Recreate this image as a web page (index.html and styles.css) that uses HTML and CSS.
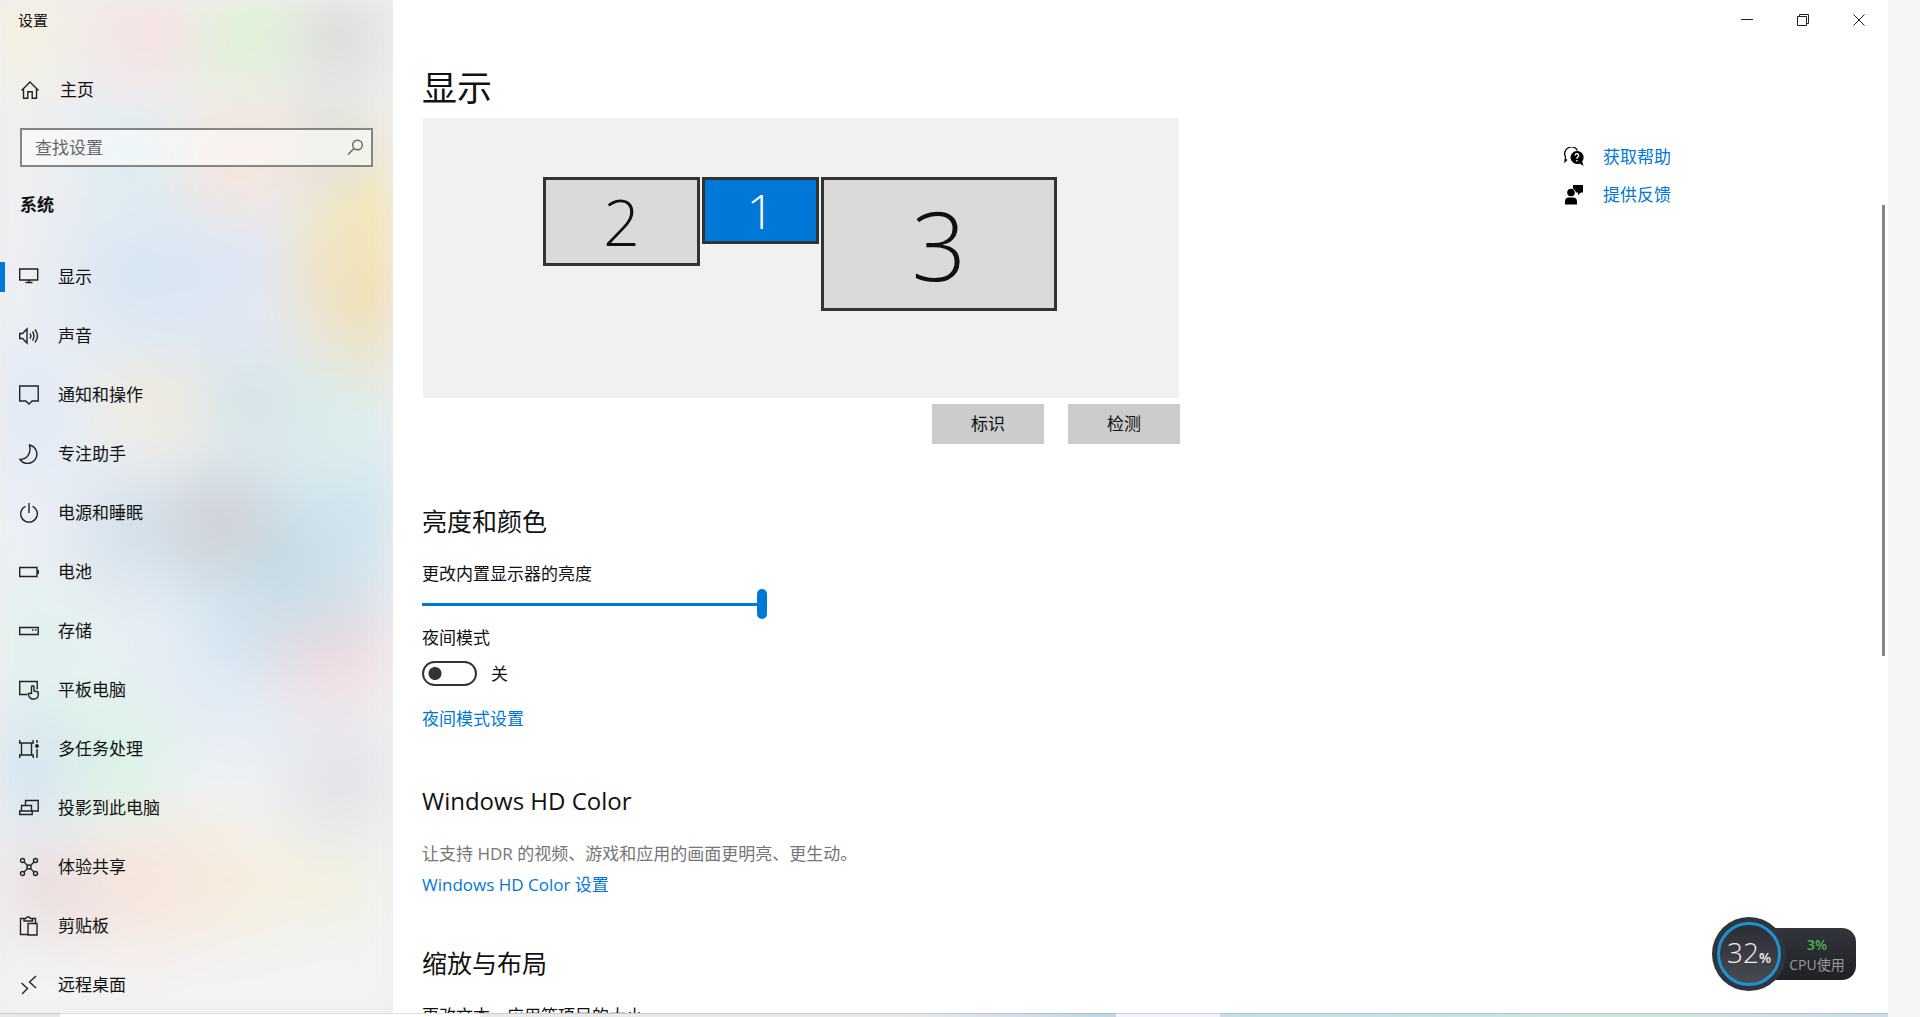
FILE: index.html
```html
<!DOCTYPE html>
<html lang="zh-CN">
<head>
    <meta charset="UTF-8">
    <meta name="viewport" content="width=device-width, initial-scale=1.0">
    <title>设置</title>
    <link rel="stylesheet" href="styles.css">
</head>
<body>
    <div class="window">
        <aside class="sidebar">
            <div class="app-title">设置</div>
            <a class="home" href="#">
                <svg class="icon" viewBox="0 0 20 20"><path d="M1.500 10.500 10 2l8.500 8.500M3.500 8.800V18.300h4.300v-6.500h4.400v6.500h4.300V8.800"/></svg>
                <span>主页</span>
            </a>
            <form class="search">
                <input type="text" aria-label="查找设置" placeholder="查找设置">
                <svg class="icon search-icon" viewBox="0 0 20 20"><circle cx="12.500" cy="7" r="4.800"/><path d="M9 10.500 3 16.500"/></svg>
            </form>
            <h2 class="group">系统</h2>
            <nav class="nav">
                <a class="active" href="#">
                    <svg class="icon" viewBox="0 0 20 20"><path d="M.7 2h18v11H.7zM10 13v2.500M6.500 15.500h7"/></svg>
                    <span>显示</span>
                </a>
                <a href="#">
                    <svg class="icon" viewBox="0 0 20 20"><path d="M.7 7.500h2.800l4.500-4.500v14l-4.500-4.500H.7zM11 7.500q1.500 2.500 0 5M13.500 5.500q3 4.500 0 9M16 3.500q5 6.500 0 13"/></svg>
                    <span>声音</span>
                </a>
                <a href="#">
                    <svg class="icon" viewBox="0 0 20 20"><path d="M.7 1h18.500v15h-6l-3.200 3-3.200-3H.7z"/></svg>
                    <span>通知和操作</span>
                </a>
                <a href="#">
                    <svg class="icon" viewBox="0 0 20 20"><path d="M10.500 1a9.300 9.300 0 1 1-9.500 14.500c7 0 11.500-6 9.500-14.500z"/></svg>
                    <span>专注助手</span>
                </a>
                <a href="#">
                    <svg class="icon" viewBox="0 0 20 20"><path d="M10 0v10M6.500 3.300a8.300 8.300 0 1 0 7 0"/></svg>
                    <span>电源和睡眠</span>
                </a>
                <a href="#">
                    <svg class="icon" viewBox="0 0 20 20"><path d="M.7 5.500h17.300v9H.7zM19.200 8v4"/></svg>
                    <span>电池</span>
                </a>
                <a href="#">
                    <svg class="icon" viewBox="0 0 20 20"><path d="M.7 6.500h18.500v7H.7zM13 9h1.500M16 9h1.500"/></svg>
                    <span>存储</span>
                </a>
                <a href="#">
                    <svg class="icon" viewBox="0 0 20 20"><path d="M8 14.500H.7v-13h17.500v8M12.500 14V6.500q1.300-1.500 2.500 0V11l4.200 1v3.500q-.500 3.300-4 3.500h-2q-2.700-.500-4.200-5 1.300-1.500 3.500 0"/></svg>
                    <span>平板电脑</span>
                </a>
                <a href="#">
                    <svg class="icon" viewBox="0 0 20 20"><path d="M.7 1v3h13.500V1M.7 19v-3h13.500v3M2.500 4v12M12.500 4v12M18 1v3M18 10V19"/><circle class="fill" cx="18" cy="7" r="1.200"/></svg>
                    <span>多任务处理</span>
                </a>
                <a href="#">
                    <svg class="icon" viewBox="0 0 20 20"><path d="M6.500 7V2.500h12.700v10.500h-6M2.500 13V7.500H12.500V13M.7 13h12.500v3.500H.7z"/></svg>
                    <span>投影到此电脑</span>
                </a>
                <a href="#">
                    <svg class="icon" viewBox="0 0 20 20"><circle cx="3.500" cy="3.500" r="2"/><circle cx="16.500" cy="3.500" r="2"/><circle cx="3.500" cy="16.500" r="2"/><circle cx="16.500" cy="16.500" r="2"/><circle cx="10" cy="10" r="2"/><path d="m5 5 3.500 3.500M15 5l-3.500 3.500M5 15l3.500-3.500M15 15l-3.500-3.500"/></svg>
                    <span>体验共享</span>
                </a>
                <a href="#">
                    <svg class="icon" viewBox="0 0 20 20"><path d="M8.500 18.500H1.500V2.500H5M13.500 2.500h3v4.500M5 5V2.500h2q2-3.500 4.500 0h2V5zM9 7.500h9v11.500H9z"/></svg>
                    <span>剪贴板</span>
                </a>
                <a href="#">
                    <svg class="icon" viewBox="0 0 20 20"><path d="m2.500 8 6 5.500L3 19M17 1l-6.500 6 6.500 6"/></svg>
                    <span>远程桌面</span>
                </a>
            </nav>
        </aside>

        <main class="main">
            <div class="titlebar">
                <button type="button" aria-label="最小化"><svg viewBox="0 0 12 12"><path d="M0 5.500h12"/></svg></button>
                <button type="button" aria-label="还原"><svg viewBox="0 0 12 12"><path d="M.5 2.500h9v9h-9zM2.500 2.500v-2h9v9h-2"/></svg></button>
                <button type="button" aria-label="关闭"><svg viewBox="0 0 12 12"><path d="m.5.500 11 11M11.500.500l-11 11"/></svg></button>
            </div>
            <div class="content">
                <section class="settings">
                    <h1>显示</h1>
                    <div class="monitors">
                        <button type="button" class="monitor second">2</button>
                        <button type="button" class="monitor first">1</button>
                        <button type="button" class="monitor third">3</button>
                    </div>
                    <div class="actions">
                        <button type="button">标识</button>
                        <button type="button">检测</button>
                    </div>

                    <h2>亮度和颜色</h2>
                    <label class="caption" for="brightness">更改内置显示器的亮度</label>
                    <input class="slider" type="range" id="brightness" min="0" max="100" value="100">
                    <label class="caption" for="night">夜间模式</label>
                    <div class="toggle-row">
                        <input class="toggle" type="checkbox" id="night">
                        <span>关</span>
                    </div>
                    <a class="link" href="#">夜间模式设置</a>

                    <h2 class="latin">Windows HD Color</h2>
                    <p class="note">让支持 HDR 的视频、游戏和应用的画面更明亮、更生动。</p>
                    <a class="link" href="#">Windows HD Color 设置</a>

                    <h2>缩放与布局</h2>
                    <p class="caption">更改文本、应用等项目的大小</p>
                </section>

                <div class="help">
                    <a class="link" href="#">
                        <svg viewBox="0 0 20 20"><path class="outline" d="M3 12.500 1 14.500l.500-4.500a6.500 6.500 0 0 1 12-6.500"/><path d="M13 4a6.500 6.500 0 1 0 2.500 12.500L19.500 19l-1.300-4.500A6.500 6.500 0 0 0 13 4z"/><path class="mark" d="M11 8.500q.3-1.800 2-1.700 1.800.2 1.700 1.700c0 1.500-1.800 1.300-1.800 3.200M12.900 13v1.400"/></svg>
                        <span>获取帮助</span>
                    </a>
                    <a class="link" href="#">
                        <svg viewBox="0 0 20 20"><circle cx="7" cy="7.500" r="3.800"/><path d="M1 19.500v-3q0-4 4-4h4q4 0 4 4v3zM9 0h10v7.500h-2L14 10V7.500H12Q11.500 4.500 9 3.500z"/></svg>
                        <span>提供反馈</span>
                    </a>
                </div>
            </div>
            <div class="scrollbar"></div>
        </main>
    </div>
    <div class="taskbar"></div>

    <div class="cpu-widget">
        <div class="cpu-panel">
            <b>3%</b>
            <span>CPU使用</span>
        </div>
        <div class="cpu-dial">
            <div class="cpu-ring">32<small>%</small></div>
        </div>
    </div>
</body>
</html>
```

FILE: styles.css
```css
* {
    box-sizing: border-box;
}

body {
    display: flex;
    flex-direction: column;
    height: 100vh;
    margin: 0;
    padding-right: 32px;
    overflow: hidden;
    background: #f6f6f6;
    color: #111;
    font-family: "Open Sans", "Noto Sans CJK SC", sans-serif;
    font-size: 17px;
    line-height: 24px;
}

h1, h2, p {
    margin: 0;
    font-weight: normal;
}

a {
    color: inherit;
    text-decoration: none;
}

button, input {
    margin: 0;
    border: 0;
    border-radius: 0;
    color: inherit;
    font: inherit;
}

.window {
    display: flex;
    flex: 1;
    min-height: 0;
}

/* sidebar with the blurred wallpaper behind it */
.sidebar {
    position: relative;
    z-index: 0;
    flex: none;
    width: 393px;
    overflow: hidden;
    background: #eee;
}

.sidebar::before {
    content: "";
    position: absolute;
    inset: 0;
    z-index: -1;
    background:
        radial-gradient(circle at 0 20px, #f5f0dc, transparent 110px),
        radial-gradient(circle at 145px 30px, #f6e2e2, transparent 95px),
        radial-gradient(circle at 240px 30px, #def2d3, transparent 95px),
        radial-gradient(circle at 335px 35px, #dcdcd9, transparent 90px),
        radial-gradient(circle at 240px 155px, #f6e3d9, transparent 95px),
        radial-gradient(circle at 325px 145px, #deded6, transparent 70px),
        radial-gradient(circle at 135px 160px, #dbecf2, transparent 95px),
        radial-gradient(circle at 395px 215px, #f4e6b5, transparent 130px),
        radial-gradient(circle at 385px 285px, #eedaae, transparent 130px),
        radial-gradient(circle at 140px 275px, #d6e5f3, transparent 120px),
        radial-gradient(circle at 235px 270px, #dfe5f4, transparent 130px),
        radial-gradient(circle at 155px 400px, #efeadd, transparent 90px),
        radial-gradient(circle at 20px 410px, #e0e9f6, transparent 110px),
        radial-gradient(circle at 240px 400px, #d3e3e8, transparent 110px),
        radial-gradient(circle at 330px 405px, #dceee9, transparent 100px),
        radial-gradient(circle at 220px 520px, #cfd1d6, transparent 85px),
        radial-gradient(circle at 280px 560px, #c1dbe6, transparent 130px),
        radial-gradient(circle at 140px 530px, #d1dfe9, transparent 100px),
        radial-gradient(circle at 385px 500px, #d3e7f1, transparent 160px),
        radial-gradient(circle at 335px 640px, #f3d7dd, transparent 105px),
        radial-gradient(circle at 240px 650px, #dae8f4, transparent 140px),
        radial-gradient(circle at 15px 770px, #d2e4f0, transparent 100px),
        radial-gradient(circle at 110px 755px, #d9f3e4, transparent 105px),
        radial-gradient(circle at 35px 650px, #e0f0ee, transparent 120px),
        radial-gradient(circle at 340px 780px, #e2e3e6, transparent 95px),
        radial-gradient(circle at 45px 885px, #ebdede, transparent 95px),
        radial-gradient(circle at 140px 880px, #f8e4d9, transparent 115px),
        radial-gradient(circle at 235px 880px, #f6eedc, transparent 100px),
        radial-gradient(circle at 325px 880px, #f2f0de, transparent 85px),
        linear-gradient(#eee, #ebeff6 50%, #f3f3f3);
    filter: blur(14px);
}

.icon {
    flex: none;
    width: 20px;
    height: 20px;
    fill: none;
    stroke: #222;
    stroke-width: 1.4;
}

.icon .fill {
    fill: #222;
}

.app-title {
    padding: 8px 18px;
    font-size: 15px;
}

.home {
    display: flex;
    align-items: center;
    gap: 20px;
    margin-top: 38px;
    padding: 0 20px;
}

.search {
    position: relative;
    margin: 26px 20px;
}

.search input {
    display: block;
    width: 100%;
    height: 39px;
    padding: 0 40px 0 13px;
    border: 2px solid #858585;
    background: rgba(255, 255, 255, 0.5);
}

.search input::placeholder {
    color: #666;
    opacity: 1;
}

.search-icon {
    position: absolute;
    top: 10px;
    right: 8px;
    stroke: #666;
}

.group {
    padding: 0 20px;
    font-size: 17px;
    font-weight: bold;
}

.nav {
    margin-top: 30px;
}

.nav a {
    display: flex;
    align-items: center;
    gap: 19px;
    height: 59px;
    padding: 0 19px;
}

.nav .active {
    background: linear-gradient(#0078d7, #0078d7) left center / 5px 30px no-repeat;
}

.main {
    position: relative;
    flex: 1;
    min-width: 0;
    overflow: hidden;
    background: #fff;
}

.titlebar {
    display: flex;
    justify-content: flex-end;
    height: 40px;
    padding-right: 1px;
}

.titlebar button {
    width: 56px;
    background: none;
}

.titlebar svg {
    width: 12px;
    height: 12px;
    fill: none;
    stroke: #222;
}

.content {
    display: flex;
    justify-content: space-between;
    padding: 25px 217px 0 29px;
}

.settings {
    width: 758px;
}

h1 {
    margin-bottom: 7px;
    font-size: 35px;
    line-height: 46px;
}

.settings h2 {
    margin: 50px 0 25px;
    font-size: 25px;
    line-height: 32px;
}

.settings .latin {
    margin-top: 54px;
    font-size: 24px;
}

/* display arrangement */
.monitors {
    display: flex;
    align-items: flex-start;
    justify-content: center;
    gap: 2px;
    height: 280px;
    margin: 0 1px;
    padding: 59px 2px 0 0;
    background: #f1f1f1;
}

.monitor {
    padding: 0;
    border: 3px solid #333;
    background: #dadada;
    font-weight: 300;
}

.monitor.second {
    width: 157px;
    height: 89px;
    font-size: 64px;
    line-height: 82px;
}

.monitor.first {
    width: 117px;
    height: 67px;
    background: #0078d7;
    color: #fff;
    font-size: 48px;
    line-height: 60px;
}

.monitor.third {
    width: 236px;
    height: 134px;
    font-size: 96px;
    line-height: 120px;
}

.actions {
    display: flex;
    justify-content: flex-end;
    gap: 24px;
    margin: 6px 0 61px;
}

.actions button {
    width: 112px;
    height: 40px;
    background: #ccc;
}

.caption,
.settings > .link {
    display: block;
}

.slider {
    display: block;
    width: 345px;
    height: 30px;
    margin: 3px 0 7px;
    background: linear-gradient(#0078d7, #0078d7) center / 100% 3px no-repeat;
    appearance: none;
}

.slider::-webkit-slider-thumb {
    width: 10px;
    height: 30px;
    border-radius: 5px;
    background: #0078d7;
    appearance: none;
}

.toggle-row {
    display: flex;
    align-items: center;
    gap: 14px;
    margin: 11px 0 21px;
}

.toggle {
    width: 55px;
    height: 25px;
    border: 2px solid #333;
    border-radius: 13px;
    background: radial-gradient(circle at 11px 50%, #333 6px, transparent 7px);
    appearance: none;
}

.link {
    color: #0078d7;
}

.note {
    margin-bottom: 7px;
    color: #767676;
}

.help {
    display: flex;
    flex-direction: column;
    gap: 14px;
    padding-top: 80px;
}

.help .link {
    display: flex;
    align-items: center;
    gap: 19px;
}

.help svg {
    width: 20px;
    height: 20px;
    fill: #000;
}

.help .outline {
    fill: none;
    stroke: #000;
    stroke-width: 1.3;
}

.help .mark {
    fill: none;
    stroke: #fff;
    stroke-width: 1.4;
}

.scrollbar {
    position: absolute;
    top: 205px;
    right: 3px;
    width: 3px;
    height: 451px;
    background: #858585;
}

/* sliver of the desktop below the window */
.taskbar {
    flex: none;
    height: 4px;
    background: linear-gradient(90deg, #e8e8e8 60px, #fff 60px 480px, #e9e9eb 480px 900px, #bfd6e6 1116px, #f0f3fb 1116px 1220px, #c5dce9 1220px, #cfe6df 1660px, #c9dcea);
    box-shadow: inset 0 1px rgba(0, 0, 0, 0.12);
}

/* floating monitor */
.cpu-widget {
    position: absolute;
    right: 64px;
    bottom: 26px;
    display: flex;
    flex-direction: row-reverse;
    align-items: center;
}

.cpu-panel {
    display: flex;
    flex-direction: column;
    align-items: center;
    width: 100px;
    height: 52px;
    margin-left: -30px;
    padding: 7px 0 0 22px;
    border-radius: 14px;
    background: linear-gradient(#33343c, #202126);
    color: #999;
    font-size: 14px;
    line-height: 20px;
}

.cpu-panel b {
    color: #4db34d;
    font-weight: 600;
}

.cpu-dial {
    z-index: 1;
    padding: 5px;
    border-radius: 50%;
    background: #30343f;
}

.cpu-ring {
    display: flex;
    align-items: baseline;
    justify-content: center;
    width: 64px;
    height: 64px;
    border: 3px solid #1c94d2;
    border-radius: 50%;
    background: linear-gradient(#2c2d35, #4a4b52);
    color: #eee;
    font-size: 28px;
    font-weight: 300;
    line-height: 54px;
}

.cpu-ring small {
    font-size: 14px;
    font-weight: 600;
}
```
